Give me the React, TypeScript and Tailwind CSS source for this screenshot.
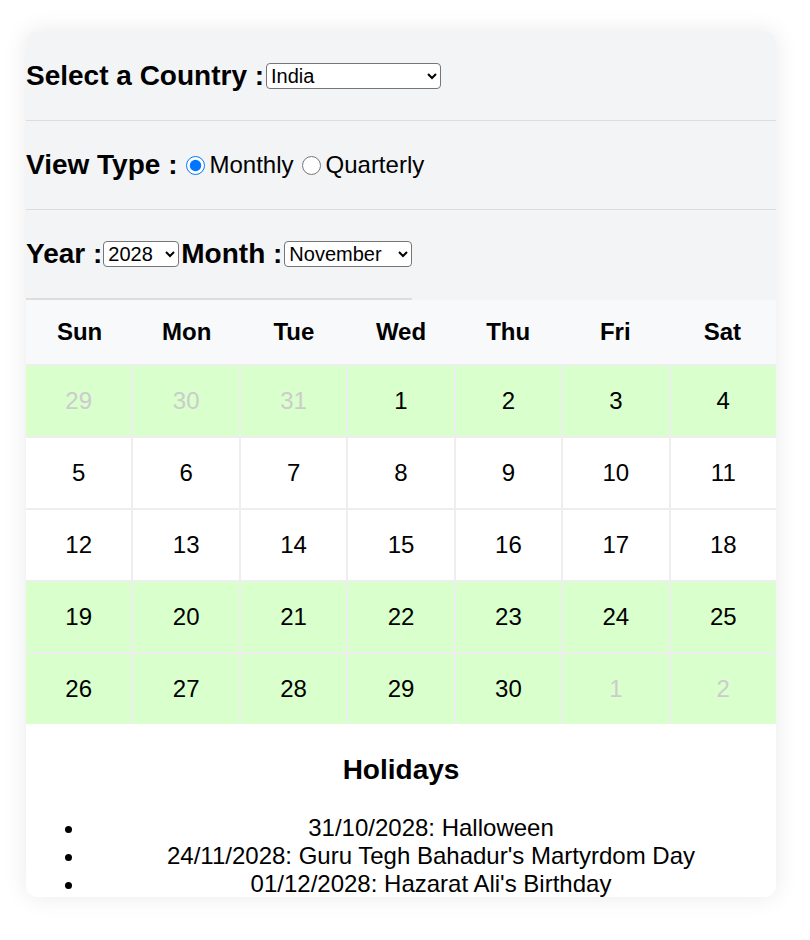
import React, { useState } from 'react';

type Day = { n: number; other?: boolean };

const weeks: Day[][] = [
  [{ n: 29, other: true }, { n: 30, other: true }, { n: 31, other: true }, { n: 1 }, { n: 2 }, { n: 3 }, { n: 4 }],
  [{ n: 5 }, { n: 6 }, { n: 7 }, { n: 8 }, { n: 9 }, { n: 10 }, { n: 11 }],
  [{ n: 12 }, { n: 13 }, { n: 14 }, { n: 15 }, { n: 16 }, { n: 17 }, { n: 18 }],
  [{ n: 19 }, { n: 20 }, { n: 21 }, { n: 22 }, { n: 23 }, { n: 24 }, { n: 25 }],
  [{ n: 26 }, { n: 27 }, { n: 28 }, { n: 29 }, { n: 30 }, { n: 1, other: true }, { n: 2, other: true }],
];

// weeks that contain a holiday get the green row
const holidayWeeks = [0, 3, 4];

const dayNames = ['Sun', 'Mon', 'Tue', 'Wed', 'Thu', 'Fri', 'Sat'];

const holidays = [
  '31/10/2028: Halloween',
  "24/11/2028: Guru Tegh Bahadur's Martyrdom Day",
  "01/12/2028: Hazarat Ali's Birthday",
];

const months = [
  'January', 'February', 'March', 'April', 'May', 'June',
  'July', 'August', 'September', 'October', 'November', 'December',
];

const App = () => {
  const [view, setView] = useState('monthly');

  return (
    <div className="min-h-screen bg-white pt-[31px] font-['Liberation_Sans',Arial,sans-serif] text-black">
      <div className="ml-[26px] h-[866px] w-[750px] overflow-hidden rounded-xl bg-white shadow-[0_0_24px_rgba(0,0,0,0.09)]">
        {/* Controls */}
        <div className="bg-[#f3f4f6]">
          <div className="flex h-[90px] items-center whitespace-nowrap border-b border-[#dddddd]">
            <span className="text-[28px] font-bold">Select a Country :</span>
            <select
              defaultValue="India"
              className="ml-[2px] h-[26px] w-[175px] shrink-0 rounded-[4px] border border-[#767676] bg-white text-[20px]"
            >
              <option>India</option>
              <option>United States</option>
              <option>United Kingdom</option>
            </select>
          </div>

          <div className="flex h-[89px] items-center whitespace-nowrap border-b border-[#dddddd]">
            <span className="text-[28px] font-bold">View Type :</span>
            <input
              type="radio"
              name="view"
              checked={view === 'monthly'}
              onChange={() => setView('monthly')}
              className="ml-[9px] mr-[4px] h-[19px] w-[19px]"
            />
            <span className="text-[24px]">Monthly</span>
            <input
              type="radio"
              name="view"
              checked={view === 'quarterly'}
              onChange={() => setView('quarterly')}
              className="ml-[8px] mr-[5px] h-[19px] w-[19px]"
            />
            <span className="text-[24px]">Quarterly</span>
          </div>

          <div className="flex h-[90px] w-fit items-center whitespace-nowrap border-b-2 border-[#dddddd]">
            <span className="shrink-0 text-[28px] font-bold">Year :</span>
            <select
              defaultValue="2028"
              className="ml-[1px] h-[26px] w-[76px] shrink-0 rounded-[4px] border border-[#767676] bg-white text-[20px]"
            >
              <option>2027</option>
              <option>2028</option>
              <option>2029</option>
            </select>
            <span className="ml-[2px] shrink-0 text-[28px] font-bold">Month :</span>
            <select
              defaultValue="November"
              className="ml-[2px] h-[26px] w-[128px] shrink-0 rounded-[4px] border border-[#767676] bg-white text-[20px]"
            >
              {months.map((m) => (
                <option key={m}>{m}</option>
              ))}
            </select>
          </div>
        </div>

        {/* Calendar */}
        <div className="grid h-[66px] grid-cols-7 border-b-2 border-[#eeeeee] bg-[#f8f9fa]">
          {dayNames.map((d) => (
            <div key={d} className="flex items-center justify-center text-[24px] font-bold">
              {d}
            </div>
          ))}
        </div>
        <div className="grid grid-cols-7 gap-[2px] bg-[#eeeeee]">
          {weeks.map((week, wi) =>
            week.map((day, di) => (
              <div
                key={`${wi}-${di}`}
                className={`flex h-[70px] items-center justify-center text-[24px] ${
                  holidayWeeks.includes(wi) ? 'bg-[#d9ffcc]' : 'bg-white'
                } ${day.other ? 'text-[#cccccc]' : 'text-black'}`}
              >
                {day.n}
              </div>
            ))
          )}
        </div>

        {/* Holidays */}
        <div className="bg-white pt-[30px]">
          <h3 className="text-center text-[28px] font-bold leading-[32px]">Holidays</h3>
          <ul className="mt-[28px] list-disc pl-[60px]">
            {holidays.map((h) => (
              <li key={h} className="text-center text-[24px] leading-[28px]">
                {h}
              </li>
            ))}
          </ul>
        </div>
      </div>
    </div>
  );
};

export default App;
